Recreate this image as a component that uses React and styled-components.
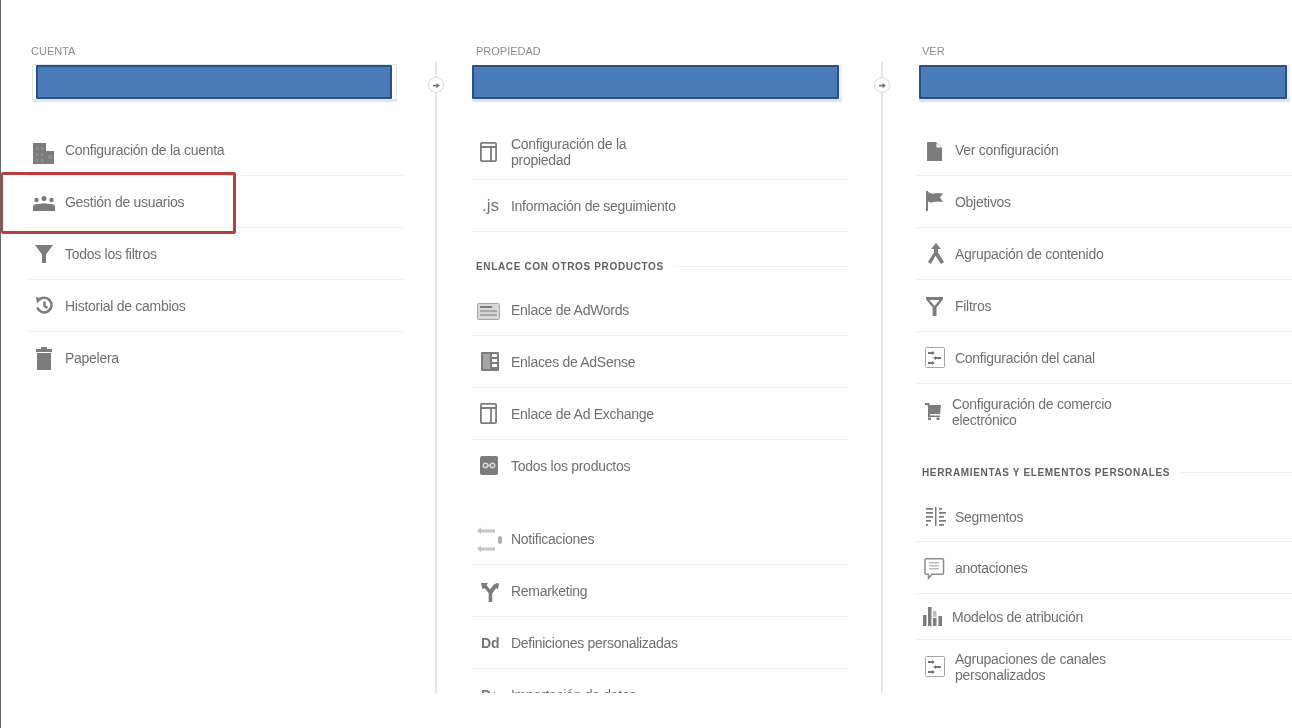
import React from "react";
import styled, {createGlobalStyle} from "styled-components";

const GREY = "#7c7c7c";

const GlobalStyle = createGlobalStyle`
  html, body {
    margin: 0;
    padding: 0;
    background: #fff;
  }
  body {
    font-family: "Liberation Sans", Arial, sans-serif;
  }
`;

const Page = styled.div`
  width: 1292px;
  height: 728px;
  box-sizing: border-box;
  border-left: 1px solid #666;
  overflow: hidden;
  background: #fff;
`;

const Columns = styled.div`
  display: grid;
  grid-template-columns: 377px 69px 376px 68px 376px;
  height: 693px;
  box-sizing: border-box;
  padding: 44px 0 0 25px;
  overflow: hidden;
  filter: blur(0.5px);
`;

const Column = styled.div`
  min-width: 0;
`;

const Title = styled.div`
  height: 20px;
  line-height: 14px;
  padding-left: ${props => props.$left}px;
  font-size: 11px;
  color: #8e8e8e;
`;

const Select = styled.div`
  box-sizing: border-box;
  width: ${props => props.$w}px;
  height: 38px;
  margin: 0 0 22px ${props => props.$x}px;
  padding: 1px ${props => props.$r}px 3px ${props => props.$l}px;
  border-radius: 2px;
  background: #fff;
  box-shadow: ${props => props.$framed
    ? "0 0 0 1px #e0e3e8 inset, 0 -3px 0 #e3e7ed inset"
    : "0 -3px 0 #dde3eb inset, -3px 0 0 #eef0f3 inset"};
`;

const Blue = styled.div`
  box-sizing: border-box;
  height: 34px;
  background: #4a7cba;
  border: 2px solid #2b5082;
  border-radius: 1px;
`;

const Row = styled.div`
  position: relative;
  display: flex;
  align-items: center;
  box-sizing: border-box;
  height: ${props => props.$height || 52}px;
  margin-top: ${props => props.$gap || 0}px;
  border-bottom: 1px solid ${props => props.$plain ? "transparent" : "#f0f0f0"};
`;

const IconSlot = styled.div`
  flex: none;
  display: flex;
  align-items: center;
  width: ${props => props.$tight ? 36 : 39}px;
  height: 36px;
`;

const IconSvg = styled.svg`
  display: block;
  width: 36px;
  height: 36px;
`;

const Glyph = styled.span`
  width: 36px;
  padding-left: ${props => props.$thin ? 10 : 9}px;
  box-sizing: border-box;
  font-size: ${props => props.$thin ? 17 : 14}px;
  font-weight: ${props => props.$thin ? 400 : 700};
  color: #757575;
  white-space: nowrap;
`;

const Label = styled.div`
  font-size: 14px;
  letter-spacing: -0.28px;
  line-height: 16px;
  color: #707070;
  white-space: nowrap;
`;

const Heading = styled.div`
  display: flex;
  align-items: center;
  gap: 9px;
  box-sizing: border-box;
  height: 52px;
  padding: ${props => props.$top}px 0 0 ${props => props.$left}px;
  font-size: 10px;
  font-weight: 700;
  color: #616161;
  letter-spacing: 0.65px;
  white-space: nowrap;

  &::after {
    content: "";
    flex: 1;
    height: 1px;
    background: #f0f0f0;
  }
`;

const Highlight = styled.div`
  position: absolute;
  left: -25px;
  top: -4px;
  width: 235px;
  height: 62px;
  box-sizing: border-box;
  border: 3px solid #bb3e3c;
  border-left-width: 2px;
  border-radius: 2px;
`;

const Divider = styled.div`
  padding: 18px 0 0 ${props => props.$x}px;
`;

const Line = styled.div`
  position: relative;
  width: 2px;
  height: 100%;
  background: #e6e6e6;
`;

const Knob = styled.div`
  position: absolute;
  top: 15px;
  left: -7px;
  display: flex;
  align-items: center;
  justify-content: center;
  box-sizing: border-box;
  width: 16px;
  height: 16px;
  border: 1.5px solid #d8d8d8;
  border-radius: 50%;
  background: #fff;
`;

// every icon is drawn in a 36px square that sits at the row's left edge, centred on the row
const Svg = ({children}) => (
  <IconSvg viewBox="0 0 36 36" fill={GREY}>{children}</IconSvg>
);

const BuildingIcon = () => (
  <Svg>
    <path d="M7 11h13v21H7z" />
    <path d="M20 19h8v13h-8z" />
    <path fill="#8e8e8e" d="M10 15h2v3h-2zM15 15h2v3h-2zM10 21h2v3h-2zM15 21h2v3h-2zM10 27h2v3h-2zM15 27h2v3h-2zM22 23h4v4h-4z" />
  </Svg>
);
const UsersIcon = () => (
  <Svg>
    <circle cx="18" cy="14.500" r="2.500" />
    <circle cx="10.500" cy="16" r="2.200" />
    <circle cx="25.500" cy="16" r="2.200" />
    <path d="M7 27v-4q0-3 4-3h2.500q4.500-1.500 9 0H25q4 0 4 3v4z" />
  </Svg>
);
const FilterIcon = () => (
  <Svg><path d="M9 9h18l-7 9.500V27h-4v-8.500z" /></Svg>
);
const HistoryIcon = () => (
  <Svg>
    <g fill="none" stroke={GREY} strokeWidth="2.500">
      <path d="M12.500 12.500a7.300 7.300 0 1 1-1.200 7" />
      <path d="M18.500 13.500v4.500l3 2" />
    </g>
    <path d="M10 9l6 1.500-5 5z" />
  </Svg>
);
const TrashIcon = () => (
  <Svg>
    <path d="M15 7h6v2h-6zM10 9h16v3H10zM11 13h14v17H11z" />
  </Svg>
);
const WindowIcon = ({y = 8, h = 20}) => (
  <Svg>
    <g fill="none" stroke={GREY} strokeWidth="1.800">
      <rect x="8.900" y={y + 0.9} width="15.200" height={h - 1.8} rx="1" />
      <path d={`M9 ${y + 5}h15M19 ${y + 5}v${h - 6}`} />
    </g>
  </Svg>
);
const AdWordsIcon = () => (
  <Svg>
    <rect x="5.500" y="11.500" width="22" height="16" rx="1" fill="#d8d8d8" stroke="#a6a6a6" />
    <path d="M8 14h12v2H8z" />
    <path fill="#a8a8a8" d="M8 18h17v2H8zM8 22h17v2H8z" />
  </Svg>
);
const AdSenseIcon = () => (
  <Svg>
    <rect x="9" y="8" width="18" height="19" rx="1" />
    <path fill="#fff" d="M20 10h5v3h-5zM20 15h5v3h-5zM20 20h5v3h-5z" />
    <path fill="#a6a6a6" d="M11 10h7v15h-7z" />
  </Svg>
);
const ProductsIcon = () => (
  <Svg>
    <rect x="8" y="8" width="18" height="19" rx="2" />
    <g fill="none" stroke="#d8d8d8" strokeWidth="1.500">
      <circle cx="13.500" cy="17.500" r="2.200" />
      <circle cx="20.500" cy="17.500" r="2.200" />
      <path d="M15.500 17.500h3" />
    </g>
  </Svg>
);
const NotifyIcon = () => (
  <Svg>
    <g fill="#c4c4c4">
      <path d="M5 9.500l4-3v2h14v3H9v2zM5 27.500l4-3v2h14v3H9v2z" />
      <rect x="26" y="15" width="4" height="8" rx="2" fill="#b0b0b0" />
    </g>
  </Svg>
);
const RemarketingIcon = () => (
  <Svg>
    <path d="M9 10h7l-1.500 2 3.500 4.500 4-5 3-1.500 2 .5-1 6-1.800-1.500-4 5.500V29h-3.500v-9l-4.300-5-1.400 1.500-1-2z" />
  </Svg>
);
const DocIcon = () => (
  <Svg><path d="M11 10h9l6 6v13H11z" /><path fill="#fff" d="M20.500 11v4.500h4.500z" /></Svg>
);
const FlagIcon = () => (
  <Svg>
    <path d="M10 7h2v20h-2z" />
    <path d="M12 8q4 2.500 6 1.500t9 0l-3 4 3 4.500q-6-1-9 0t-6-.5z" />
  </Svg>
);
const MergeIcon = () => (
  <Svg>
    <path d="M20 7l5 6h-3v3.500L28 26l-3 2-5.500-8.300L14.800 28 12 26l6-9.500V13H15z" />
  </Svg>
);
const FilterOutlineIcon = () => (
  <Svg>
    <path d="M10 9h17v2.500l-6.500 8V28h-3.800v-8.500L10 11.500z" />
    <path fill="#fff" d="M13.500 12h10l-5 6z" />
  </Svg>
);
const ChannelIcon = ({y = 7}) => (
  <Svg>
    <rect x="9.500" y={y + 0.5} width="19" height="20" rx="1" fill="#fff" stroke="#a6a6a6" />
    <path d={`M12 ${y + 5}h4v2h-4zM20 ${y + 10}h5v2h-5zM12 ${y + 15}h4v2h-4z`} fill="#777" />
    <path d={`M16 ${y + 4}l3 2-3 2zM20 ${y + 9}l-3 2 3 2zM16 ${y + 14}l3 2-3 2z`} fill="#777" />
  </Svg>
);
const CartIcon = () => (
  <Svg>
    <path d="M9 9h4l.8 2H25l-1 9H14v1.500h10V23H12V12.500L11.500 11H9z" />
    <rect x="12" y="23.500" width="3" height="2.500" />
    <rect x="20.500" y="23.500" width="3" height="2.500" />
  </Svg>
);
const SegmentsIcon = () => (
  <Svg>
    <path d="M19 8h1.500v19H19z" />
    <path d="M10 9h7v1.800h-7zM10 13h7v1.800h-7zM10 17h7v1.800h-7zM10 21h5v1.800h-5zM10 25h2v1.800h-2zM23 9h3v1.800h-3zM23 13h7v1.800h-7zM23 17h5v1.800h-5zM23 21h7v1.800h-7zM23 25h5v1.800h-5z" />
  </Svg>
);
const NoteIcon = () => (
  <Svg>
    <path fill="#fff" stroke="#8c8c8c" strokeWidth="1.500" d="M10 8.800h16.500q1 0 1 1v13.400q0 1-1 1H16l-3.500 4v-4H10q-1 0-1-1V9.800q0-1 1-1z" />
    <path fill="#bdbdbd" d="M13 12h10v1.500H13zM13 15h10v1.500H13zM13 18h10v1.500H13z" />
  </Svg>
);
const ModelsIcon = () => (
  <Svg>
    <path d="M7 16h3.500v11H7zM12 8h3.500v19H12zM17 19h3.500v8H17zM22.500 17h3.500v10h-3.500z" />
    <path fill="#bdbdbd" d="M17 12h3.500v6H17z" />
  </Svg>
);
const ArrowIcon = () => (
  <svg viewBox="0 0 8 8" width="7" height="7" fill="#777">
    <path d="M0 3h4V1l4 3-4 3V5H0z" />
  </svg>
);

const cuenta = [
  {text: "Configuración de la cuenta", icon: <BuildingIcon />},
  {text: "Gestión de usuarios", icon: <UsersIcon />, highlight: true},
  {text: "Todos los filtros", icon: <FilterIcon />},
  {text: "Historial de cambios", icon: <HistoryIcon />},
  {text: "Papelera", icon: <TrashIcon />, plain: true},
];

const propiedad = [
  {text: ["Configuración de la", "propiedad"], icon: <WindowIcon />, height: 56},
  {text: "Información de seguimiento", icon: <Glyph $thin>.js</Glyph>},
  {heading: "ENLACE CON OTROS PRODUCTOS", top: 16, left: 4},
  {text: "Enlace de AdWords", icon: <AdWordsIcon />},
  {text: "Enlaces de AdSense", icon: <AdSenseIcon />},
  {text: "Enlace de Ad Exchange", icon: <WindowIcon y={7} h={21} />},
  {text: "Todos los productos", icon: <ProductsIcon />, plain: true},
  {text: "Notificaciones", icon: <NotifyIcon />, gap: 21},
  {text: "Remarketing", icon: <RemarketingIcon />},
  {text: "Definiciones personalizadas", icon: <Glyph>Dd</Glyph>},
  {text: "Importación de datos", icon: <Glyph>D↑</Glyph>},
];

const ver = [
  {text: "Ver configuración", icon: <DocIcon />},
  {text: "Objetivos", icon: <FlagIcon />},
  {text: "Agrupación de contenido", icon: <MergeIcon />},
  {text: "Filtros", icon: <FilterOutlineIcon />},
  {text: "Configuración del canal", icon: <ChannelIcon />},
  {text: ["Configuración de comercio", "electrónico"], icon: <CartIcon />, height: 56, tight: true, plain: true},
  {heading: "HERRAMIENTAS Y ELEMENTOS PERSONALES", top: 12, left: 6},
  {text: "Segmentos", icon: <SegmentsIcon />, height: 50},
  {text: "anotaciones", icon: <NoteIcon />},
  {text: "Modelos de atribución", icon: <ModelsIcon />, height: 46, tight: true},
  {text: ["Agrupaciones de canales", "personalizados"], icon: <ChannelIcon />, height: 54, plain: true},
];

const Items = ({items}) => items.map((item, i) => {
  if (item.heading) {
    return (
      <Heading key={i} $top={item.top} $left={item.left}>
        <span>{item.heading}</span>
      </Heading>
    );
  }
  const lines = Array.isArray(item.text) ? item.text : [item.text];
  return (
    <Row key={i} $height={item.height} $plain={item.plain} $gap={item.gap}>
      <IconSlot $tight={item.tight}>{item.icon}</IconSlot>
      <Label>{lines.map((line) => <div key={line}>{line}</div>)}</Label>
      {item.highlight && <Highlight />}
    </Row>
  );
});

const App = () => (
  <Page>
    <GlobalStyle />
    <Columns>
      <Column>
        <Title $left={5}>CUENTA</Title>
        <Select $x={6} $w={365} $l={4} $r={5} $framed><Blue /></Select>
        <Items items={cuenta} />
      </Column>
      <Divider $x={32}>
        <Line><Knob><ArrowIcon /></Knob></Line>
      </Divider>
      <Column>
        <Title $left={4}>PROPIEDAD</Title>
        <Select $x={0} $w={370} $l={0} $r={3}><Blue /></Select>
        <Items items={propiedad} />
      </Column>
      <Divider $x={33}>
        <Line><Knob><ArrowIcon /></Knob></Line>
      </Divider>
      <Column>
        <Title $left={6}>VER</Title>
        <Select $x={3} $w={371} $l={0} $r={3}><Blue /></Select>
        <Items items={ver} />
      </Column>
    </Columns>
  </Page>
);

export default App;
